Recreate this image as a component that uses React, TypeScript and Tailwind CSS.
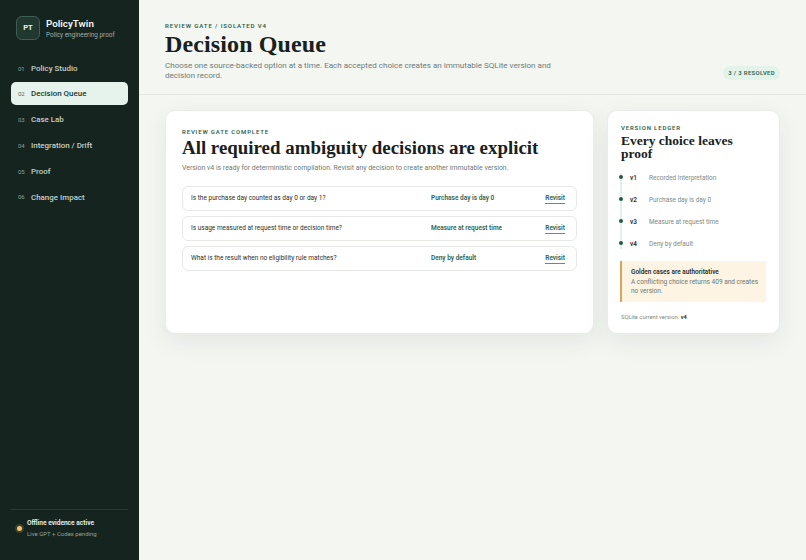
const nav = [
  ['01', 'Policy Studio'],
  ['02', 'Decision Queue'],
  ['03', 'Case Lab'],
  ['04', 'Integration / Drift'],
  ['05', 'Proof'],
  ['06', 'Change Impact'],
];

const decisions = [
  ['Is the purchase day counted as day 0 or day 1?', 'Purchase day is day 0'],
  ['Is usage measured at request time or decision time?', 'Measure at request time'],
  ['What is the result when no eligibility rule matches?', 'Deny by default'],
];

const versions = [
  ['v1', 'Recorded interpretation'],
  ['v2', 'Purchase day is day 0'],
  ['v3', 'Measure at request time'],
  ['v4', 'Deny by default'],
];

function Sidebar() {
  return (
    <aside className="w-[139px] shrink-0 bg-[#15241f] px-[11px] pt-[16px] pb-[22px] flex flex-col">
      <div className="flex items-center gap-[6px] pl-[5px]">
        <div className="w-[24px] h-[24px] rounded-[6px] border border-[#3f5f53] bg-[#20382f] flex items-center justify-center text-[7.5px] font-bold text-[#e8f4ee]">
          PT
        </div>
        <div className="pt-[1px]">
          <div className="text-[9.8px] leading-[13px] font-semibold text-[#f4f7f5]">PolicyTwin</div>
          <div className="text-[6.4px] leading-[10px] text-[#9db0a8]">Policy engineering proof</div>
        </div>
      </div>
      <nav className="mt-[16.5px] flex flex-col gap-[2.8px]">
        {nav.map(([num, label]) => {
          const active = label === 'Decision Queue';
          return (
            <div
              key={num}
              className={
                active
                  ? 'h-[23px] rounded-[5px] bg-[#e6f3ec] flex items-center gap-[7px] px-[7px] text-[#173a2f]'
                  : 'h-[23px] rounded-[5px] flex items-center gap-[7px] px-[7px] text-[#c3d0ca]'
              }
            >
              <span className={active ? 'w-[6px] text-[6px] text-[#4f6b60]' : 'w-[6px] text-[6px] text-[#8ea198]'}>{num}</span>
              <span className="text-[7.95px] font-medium pt-[1px]">{label}</span>
            </div>
          );
        })}
      </nav>
      <div className="mt-auto border-t border-[#2a3b35] pt-[8px] flex items-center gap-[5.5px] pl-[5.5px]">
        <span className="w-[5px] h-[5px] rounded-full bg-[#f2c46d] shadow-[0_0_0_2px_rgba(242,196,109,0.18)]" />
        <div>
          <div className="text-[6.6px] leading-[10px] font-semibold text-[#eef3f0]">Offline evidence active</div>
          <div className="text-[6px] leading-[9px] mt-[1px] text-[#8fa39a]">Live GPT + Codex pending</div>
        </div>
      </div>
    </aside>
  );
}

function Header() {
  return (
    <header className="h-[95px] border-b border-[#e5e9e5] px-[26px] pt-[22px] flex items-end justify-between">
      <div className="self-start w-[395px]">
        <div className="text-[6.1px] leading-[7px] font-semibold tracking-[0.14em] text-[#2f6350]">REVIEW GATE / ISOLATED V4</div>
        <h1 className="font-['Liberation_Serif',serif] text-[24px] leading-[26px] font-bold tracking-[0.005em] text-[#18211d] mt-[2px]">Decision Queue</h1>
        <p className="text-[8.05px] leading-[10.5px] mt-[3.5px] text-[#6f7b75]">
          Choose one source-backed option at a time. Each accepted choice creates an immutable SQLite version and decision record.
        </p>
      </div>
      <div className="mb-[14px] h-[14px] rounded-full bg-[#e3f3ea] px-[5px] flex items-center text-[5.9px] font-semibold tracking-[0.06em] text-[#2f6350]">
        3 / 3 RESOLVED
      </div>
    </header>
  );
}

function QueueCard() {
  return (
    <section className="w-[429px] h-[224px] rounded-[10px] bg-white border border-[#e9ece9] shadow-[0_8px_24px_rgba(30,50,40,0.08)] px-[16px] pt-[17px]">
      <div className="text-[6px] leading-[7px] font-semibold tracking-[0.14em] text-[#2f6350]">REVIEW GATE COMPLETE</div>
      <h2 className="font-['Liberation_Serif',serif] text-[18.9px] leading-[21px] font-bold text-[#18211d] mt-[2px]">
        All required ambiguity decisions are explicit
      </h2>
      <p className="text-[6.92px] leading-[10px] mt-[5px] text-[#6f7b75]">
        Version v4 is ready for deterministic compilation. Revisit any decision to create another immutable version.
      </p>
      <div className="mt-[13px] flex flex-col gap-[5px]">
        {decisions.map(([q, a]) => (
          <div key={q} className="h-[25px] rounded-[6px] border border-[#e6e9e6] flex items-center pl-[8px] pr-[11px] text-[6.5px]">
            <span className="w-[240px] text-[#27302c]">{q}</span>
            <span className="font-semibold text-[#2f6350]">{a}</span>
            <span className="ml-auto font-semibold text-[#2f6350] border-b border-[#5f9080] leading-[9px]">Revisit</span>
          </div>
        ))}
      </div>
    </section>
  );
}

function LedgerCard() {
  return (
    <section className="w-[173px] h-[224px] rounded-[10px] bg-white border border-[#e9ece9] shadow-[0_8px_24px_rgba(30,50,40,0.08)] px-[13px] pt-[13px]">
      <div className="text-[6px] leading-[7px] font-semibold tracking-[0.14em] text-[#2f6350]">VERSION LEDGER</div>
      <h3 className="font-['Liberation_Serif',serif] text-[13.5px] leading-[13px] font-bold text-[#18211d] mt-[3px]">Every choice leaves proof</h3>
      <div className="mt-[13px] ml-[-1px] border-l-2 border-[#e3f0ea] flex flex-col gap-[12px]">
        {versions.map(([v, text]) => (
          <div key={v} className="relative h-[10px] flex items-center pl-[8px] pt-[2px] text-[6.45px]">
            <span className="absolute left-[-3px] top-[2px] w-[4px] h-[4px] rounded-full bg-[#1f5b47]" />
            <span className="w-[19px] font-semibold text-[#27302c]">{v}</span>
            <span className="text-[#7e8a84]">{text}</span>
          </div>
        ))}
      </div>
      <div className="mt-[11.5px] ml-[-1px] h-[41px] bg-[#fdf4e4] border-l-2 border-[#dca65a] pl-[9px] pr-[6px] pt-[7.5px]">
        <div className="text-[6.45px] leading-[9px] font-semibold text-[#27302c]">Golden cases are authoritative</div>
        <div className="text-[6.5px] leading-[9px] mt-[1px] text-[#6d7771]">A conflicting choice returns 409 and creates no version.</div>
      </div>
      <div className="mt-[11px] text-[5.8px] leading-[8px] text-[#7e8a84]">
        SQLite current version: <span className="font-semibold text-[#27302c]">v4</span>
      </div>
    </section>
  );
}

export default function App() {
  return (
    <div className="w-[806px] h-[560px] flex bg-[#f4f6f2] font-['Roboto',sans-serif] overflow-hidden">
      <Sidebar />
      <main className="flex-1 min-w-0">
        <Header />
        <div className="pl-[26px] pt-[15px] flex gap-[13px]">
          <QueueCard />
          <LedgerCard />
        </div>
      </main>
    </div>
  );
}
